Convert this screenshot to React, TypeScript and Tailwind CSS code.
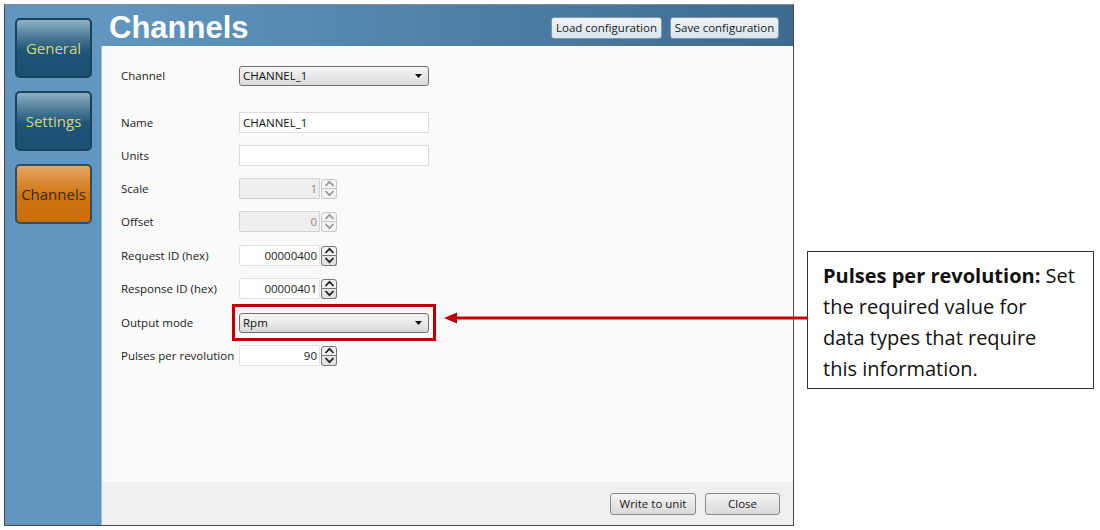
import React from "react";

const ui = { fontFamily: '"Open Sans", "Noto Sans", sans-serif' };

function SideButton({ label, active }: { label: string; active?: boolean }) {
  return (
    <div
      className={
        "w-[77px] h-[60px] rounded-[5px] border-2 flex items-center justify-center text-[15px] " +
        (active
          ? "border-[#2f4f66] bg-[linear-gradient(to_bottom,#e6a766_0%,#d98a33_30%,#cf7410_55%,#c86e0c_100%)] text-[#3b2a0c]"
          : "border-[#17435e] bg-[linear-gradient(to_bottom,#8fb0c4_0%,#4d7c98_30%,#1d5576_55%,#1a4f6f_100%)] text-[#d8d47e]")
      }
      style={ui}
    >
      {label}
    </div>
  );
}

function Label({ children }: { children: React.ReactNode }) {
  return (
    <div className="w-[118px] text-[11.5px] text-[#222]" style={ui}>
      {children}
    </div>
  );
}

function Chevron({ up, dark }: { up?: boolean; dark?: boolean }) {
  return (
    <svg width="11" height="7" viewBox="0 0 11 7">
      <path
        d={up ? "M1.5 6 L5.5 1.8 L9.5 6" : "M1.5 1 L5.5 5.2 L9.5 1"}
        fill="none"
        stroke={dark ? "#222" : "#9a9a9a"}
        strokeWidth="1.8"
      />
    </svg>
  );
}

function Spin({ value, disabled }: { value: string; disabled?: boolean }) {
  return (
    <div className="flex items-center h-[21px]">
      <div
        className={
          "w-[81px] h-[21px] border rounded-l-[2px] flex items-center justify-end pr-[2px] text-[11.5px] " +
          (disabled
            ? "bg-[#efefef] border-[#d2d2d2] text-[#8a8a8a]"
            : "bg-white border-[#e2e2e2] text-[#222]")
        }
        style={ui}
      >
        {value}
      </div>
      <div className="flex flex-col ml-[1px]">
        <div
          className={
            "w-[16px] h-[10px] border rounded-t-[3px] flex items-center justify-center " +
            (disabled ? "border-[#c8c8c8] bg-[#f4f4f4]" : "border-[#777] bg-[#f2f2f2]")
          }
        >
          <Chevron up dark={!disabled} />
        </div>
        <div
          className={
            "w-[16px] h-[10px] border border-t-0 rounded-b-[3px] flex items-center justify-center " +
            (disabled ? "border-[#c8c8c8] bg-[#f4f4f4]" : "border-[#777] bg-[#e4e4e4]")
          }
        >
          <Chevron dark={!disabled} />
        </div>
      </div>
    </div>
  );
}

function Combo({ value }: { value: string }) {
  return (
    <div
      className="w-[190px] h-[20px] rounded-[3px] border border-[#707070] bg-[linear-gradient(to_bottom,#f4f4f4,#e9e9e9_50%,#d8d8d8)] flex items-center justify-between pl-[3px] pr-[6px] text-[11.5px] text-[#111]"
      style={ui}
    >
      <span>{value}</span>
      <svg width="7" height="4" viewBox="0 0 7 4">
        <path d="M0 0 H7 L3.5 4 Z" fill="#111" />
      </svg>
    </div>
  );
}

function TextBox({ value }: { value: string }) {
  return (
    <div
      className="w-[190px] h-[21px] border border-[#dcdcdc] bg-white flex items-center pl-[3px] text-[11.5px] text-[#111]"
      style={ui}
    >
      {value}
    </div>
  );
}

function Row({ label, children, mt }: { label: string; children: React.ReactNode; mt?: string }) {
  return (
    <div className={"flex items-center h-[21px] " + (mt ?? "")}>
      <Label>{label}</Label>
      {children}
    </div>
  );
}

function Btn({ children, w, blue }: { children: React.ReactNode; w: string; blue?: boolean }) {
  return (
    <div
      className={
        w +
        " h-[22px] rounded-[3px] border flex items-center justify-center text-[11.5px] text-[#1a1a1a] " +
        (blue
          ? "border-[#7f98ad] bg-[linear-gradient(to_bottom,#eef3f7,#dae5ee)]"
          : "border-[#8a8a8a] bg-[linear-gradient(to_bottom,#f6f6f6,#e6e6e6_50%,#dadada)]")
      }
      style={ui}
    >
      {children}
    </div>
  );
}

export default function App() {
  return (
    <div className="relative w-[1100px] h-[530px] bg-white overflow-hidden flex">
      {/* window */}
      <div className="mt-[4px] ml-[4px] w-[790px] h-[522px] border border-[#4a4a4a] border-t-[#8c8c8c] flex bg-[#6096c0]">
        {/* sidebar */}
        <div className="w-[96px] flex flex-col items-center pt-[13px] gap-[13px] pl-[1px]">
          <SideButton label="General" />
          <SideButton label="Settings" />
          <SideButton label="Channels" active />
        </div>
        {/* main */}
        <div className="flex-1 flex flex-col">
          <div className="h-[41px] flex items-start justify-between pl-[8px] pr-[14px] bg-[linear-gradient(to_right,#6096c0,#4f81a8_50%,#3c6b90)]">
            <div
              className="text-white font-bold text-[31px] leading-none mt-[7px]"
              style={{ fontFamily: '"Liberation Sans", Arial, sans-serif' }}
            >
              Channels
            </div>
            <div className="flex gap-[8px] mt-[12px]">
              <Btn w="w-[111px]" blue>
                Load configuration
              </Btn>
              <Btn w="w-[109px]" blue>
                Save configuration
              </Btn>
            </div>
          </div>
          <div className="flex-1 bg-[#fafafa] border-l border-[#9cc0dc] flex flex-col">
            <div className="flex-1 pl-[19px] pt-[19px] flex flex-col">
              <Row label="Channel">
                <Combo value="CHANNEL_1" />
              </Row>
              <Row label="Name" mt="mt-[26px]">
                <TextBox value="CHANNEL_1" />
              </Row>
              <Row label="Units" mt="mt-[12px]">
                <TextBox value="" />
              </Row>
              <Row label="Scale" mt="mt-[12px]">
                <Spin value="1" disabled />
              </Row>
              <Row label="Offset" mt="mt-[12px]">
                <Spin value="0" disabled />
              </Row>
              <Row label="Request ID (hex)" mt="mt-[13px]">
                <Spin value="00000400" />
              </Row>
              <Row label="Response ID (hex)" mt="mt-[12px]">
                <Spin value="00000401" />
              </Row>
              <Row label="Output mode" mt="mt-[13px]">
                <div className="relative">
                  <Combo value="Rpm" />
                  <div className="absolute left-[-7px] top-[-9px] w-[204px] h-[37px] border-[3px] border-[#c00000]" />
                </div>
              </Row>
              <Row label="Pulses per revolution" mt="mt-[12px]">
                <Spin value="90" />
              </Row>
            </div>
            <div className="h-[43px] bg-[#f0f0f0] flex items-center justify-end gap-[9px] pr-[13px]">
              <Btn w="w-[86px]">Write to unit</Btn>
              <Btn w="w-[75px]">Close</Btn>
            </div>
          </div>
        </div>
      </div>

      {/* callout */}
      <div className="ml-[13px] mt-[251px] w-[287px] h-[138px] border border-[#333] bg-white px-[15px] pt-[8px]">
        <p
          className="text-[20px] leading-[31px] text-[#111] whitespace-nowrap"
          style={{ fontFamily: '"Open Sans", "Noto Sans", sans-serif' }}
        >
          <b>Pulses per revolution:</b> Set
          <br />
          the required value for
          <br />
          data types that require
          <br />
          this information.
        </p>
      </div>

      {/* arrow */}
      <div className="absolute left-[444px] top-[312px] flex items-center">
        <svg width="364" height="12" viewBox="0 0 364 12">
          <path d="M0 6 L13 0.5 L13 11.5 Z" fill="#c00000" />
          <rect x="12" y="4.5" width="352" height="3" fill="#c00000" />
        </svg>
      </div>
    </div>
  );
}
